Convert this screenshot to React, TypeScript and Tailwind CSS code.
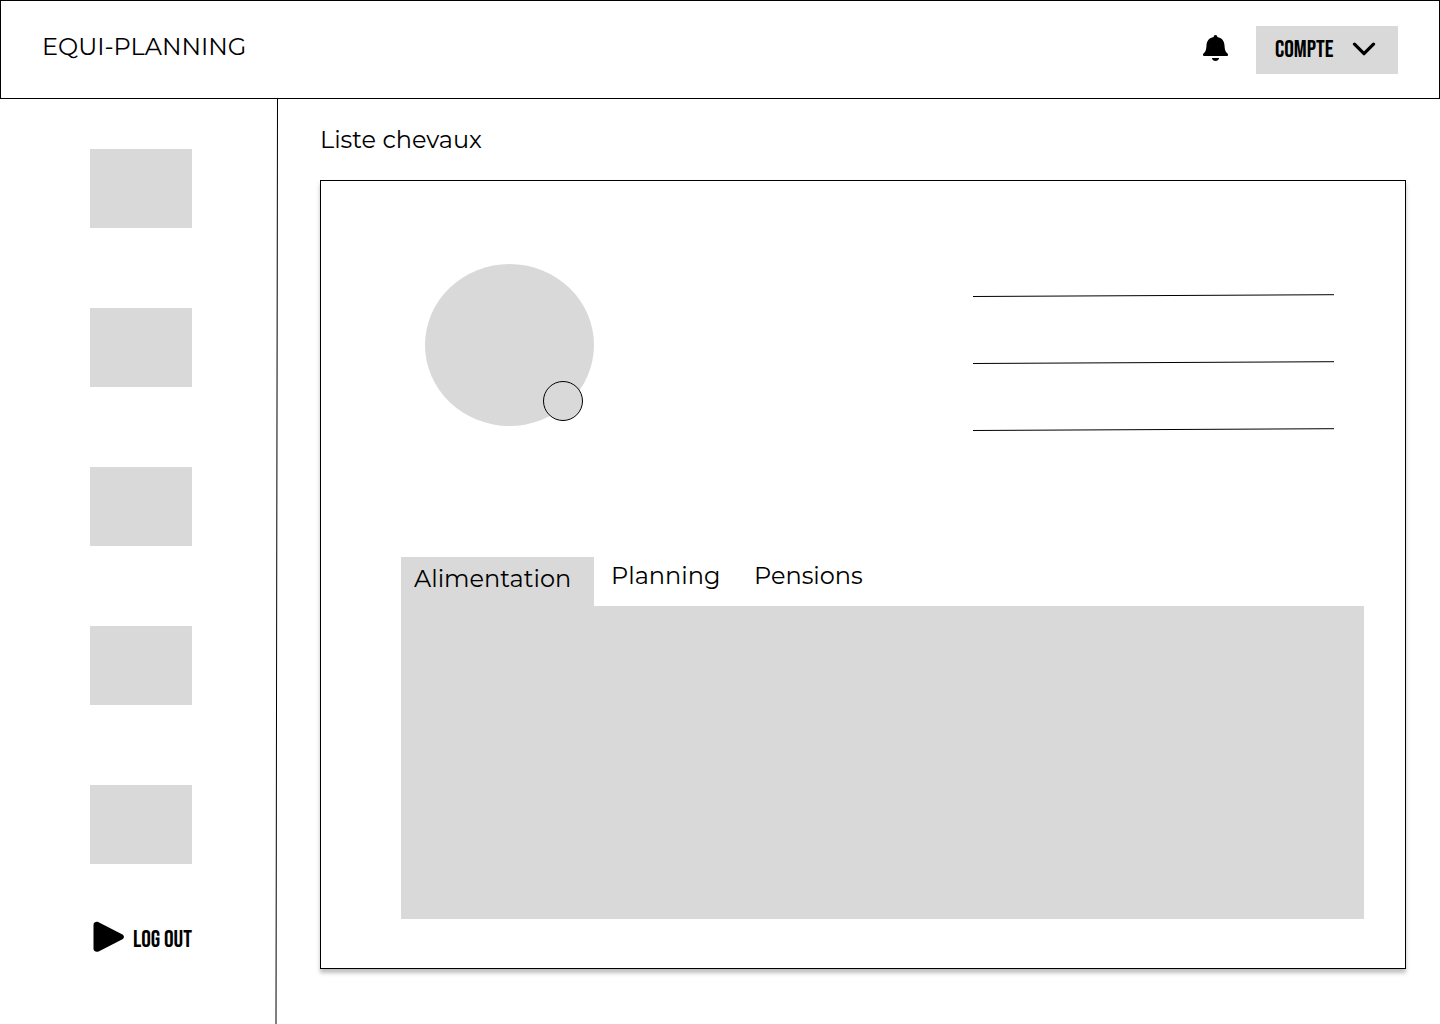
import React from "react";

const navItems = ["Accueil", "Chevaux", "Planning", "Pensions", "Messages"];
const tabs = ["Alimentation", "Planning", "Pensions"];

const bodyFont = "font-['Montserrat','Inter',sans-serif]";
const labelFont = "font-['Bebas_Neue','Liberation_Sans_Narrow',sans-serif]";

function BellIcon() {
  return (
    <svg className="h-[26px] w-[26px]" viewBox="0 0 26 26" fill="currentColor" aria-hidden="true">
      <path d="M12.5 0C13.7 0 14.3 0.8 14.3 2C18.8 2.7 21.3 6.1 21.5 10.2C21.7 14.6 22.3 16.4 24.5 18.4C25.5 19.4 25.1 21 23.7 21H1.3C0 21 -0.5 19.4 0.5 18.4C2.7 16.4 3.3 14.6 3.5 10.2C3.7 6.1 6.2 2.7 10.7 2C10.7 0.8 11.3 0 12.5 0Z" />
      <path d="M8.8 23H16.2C15.7 24.9 14.3 26 12.5 26C10.7 26 9.3 24.9 8.8 23Z" />
    </svg>
  );
}

function Header() {
  return (
    <header className="flex h-[99px] items-center border border-black px-[41px]">
      <h1 className="pb-[5px] text-2xl leading-8">EQUI-PLANNING</h1>
      <div className="ml-auto flex items-center">
        <button type="button" aria-label="Notifications" className="mr-6 flex size-8 items-center justify-center pb-[3px]">
          <BellIcon />
        </button>
        <button
          type="button"
          className={`flex h-12 w-[142px] items-center justify-between bg-[#d9d9d9] pr-[22px] pl-[19px] text-2xl ${labelFont}`}
        >
          COMPTE
          <svg className="h-4 w-6" viewBox="0 0 24 16" fill="none" stroke="currentColor" strokeWidth="3.2" strokeLinecap="round" strokeLinejoin="round" aria-hidden="true">
            <path d="M2.5 2.2 12 11.7 21.5 2.2" />
          </svg>
        </button>
      </div>
    </header>
  );
}

function Sidebar() {
  return (
    <aside className="flex w-[275px] shrink-0 flex-col pt-[50px] pl-[90px]">
      <nav className="flex flex-col gap-20" aria-label="Menu">
        {navItems.map((item) => (
          <button key={item} type="button" aria-label={item} className="h-[79px] w-[102px] bg-[#d9d9d9]" />
        ))}
      </nav>
      <button type="button" className={`mt-[57px] mb-12 flex items-start gap-2 pl-[3px] text-2xl whitespace-nowrap ${labelFont}`}>
        <svg className="h-8 w-8" viewBox="0 0 32 32" fill="currentColor" aria-hidden="true">
          <path d="M0.5 4C0.5 1.2 3.4 0.2 5.6 1.2L29 13.2C31.6 14.6 31.6 17 29 18.4L5.6 30.4C3.4 31.5 0.5 30.4 0.5 27.6Z" />
        </svg>
        <span className="leading-[38px]">LOG OUT</span>
      </button>
    </aside>
  );
}

function Profile() {
  return (
    <section className="flex items-start justify-between pt-[83px] pr-[71px] pl-[104px]">
      <div className="relative h-[162px] w-[169px] rounded-[50%] bg-[#d9d9d9]">
        <button type="button" aria-label="Modifier la photo" className="absolute right-[11px] bottom-[5px] size-10 rounded-full border border-black bg-[#d9d9d9]" />
      </div>
      <div className="flex flex-col gap-16 pt-[30px]">
        {[0, 1, 2].map((line) => (
          <svg key={line} className="h-[3px] w-[361px]" viewBox="0 0 361 3" stroke="black" aria-hidden="true">
            <path d="M0 2.5 361 0.7" />
          </svg>
        ))}
      </div>
    </section>
  );
}

function Details() {
  return (
    <section className="mt-[126px] flex grow flex-col pr-[41px] pl-20">
      <div role="tablist" className="flex h-[49px] text-2xl leading-8">
        <button role="tab" type="button" aria-selected="true" className="w-[193px] bg-[#d9d9d9] pb-[6px] pl-[13px] text-left">
          {tabs[0]}
        </button>
        <button role="tab" type="button" aria-selected="false" className="ml-[17px] w-[143px] pb-3 text-left">
          {tabs[1]}
        </button>
        <button role="tab" type="button" aria-selected="false" className="pb-3 text-left">
          {tabs[2]}
        </button>
      </div>
      <div role="tabpanel" aria-label={tabs[0]} className="min-h-60 grow bg-[#d9d9d9]" />
    </section>
  );
}

export default function App() {
  return (
    <div className={`flex min-h-screen flex-col bg-white text-black ${bodyFont}`}>
      <Header />
      <div className="flex grow">
        <Sidebar />
        <svg className="w-[3px] shrink-0 self-stretch" viewBox="0 0 3 925" preserveAspectRatio="none" stroke="black" aria-hidden="true">
          <path d="M2.5 0 1 925" />
        </svg>
        <main className="flex grow flex-col pt-[25px] pr-[34px] pb-[55px] pl-[42px]">
          <h2 className="text-2xl leading-8">Liste chevaux</h2>
          <article className="mt-6 flex grow flex-col border border-black pb-[49px] shadow-[0_4px_4px_rgba(0,0,0,0.25)]">
            <Profile />
            <Details />
          </article>
        </main>
      </div>
    </div>
  );
}
